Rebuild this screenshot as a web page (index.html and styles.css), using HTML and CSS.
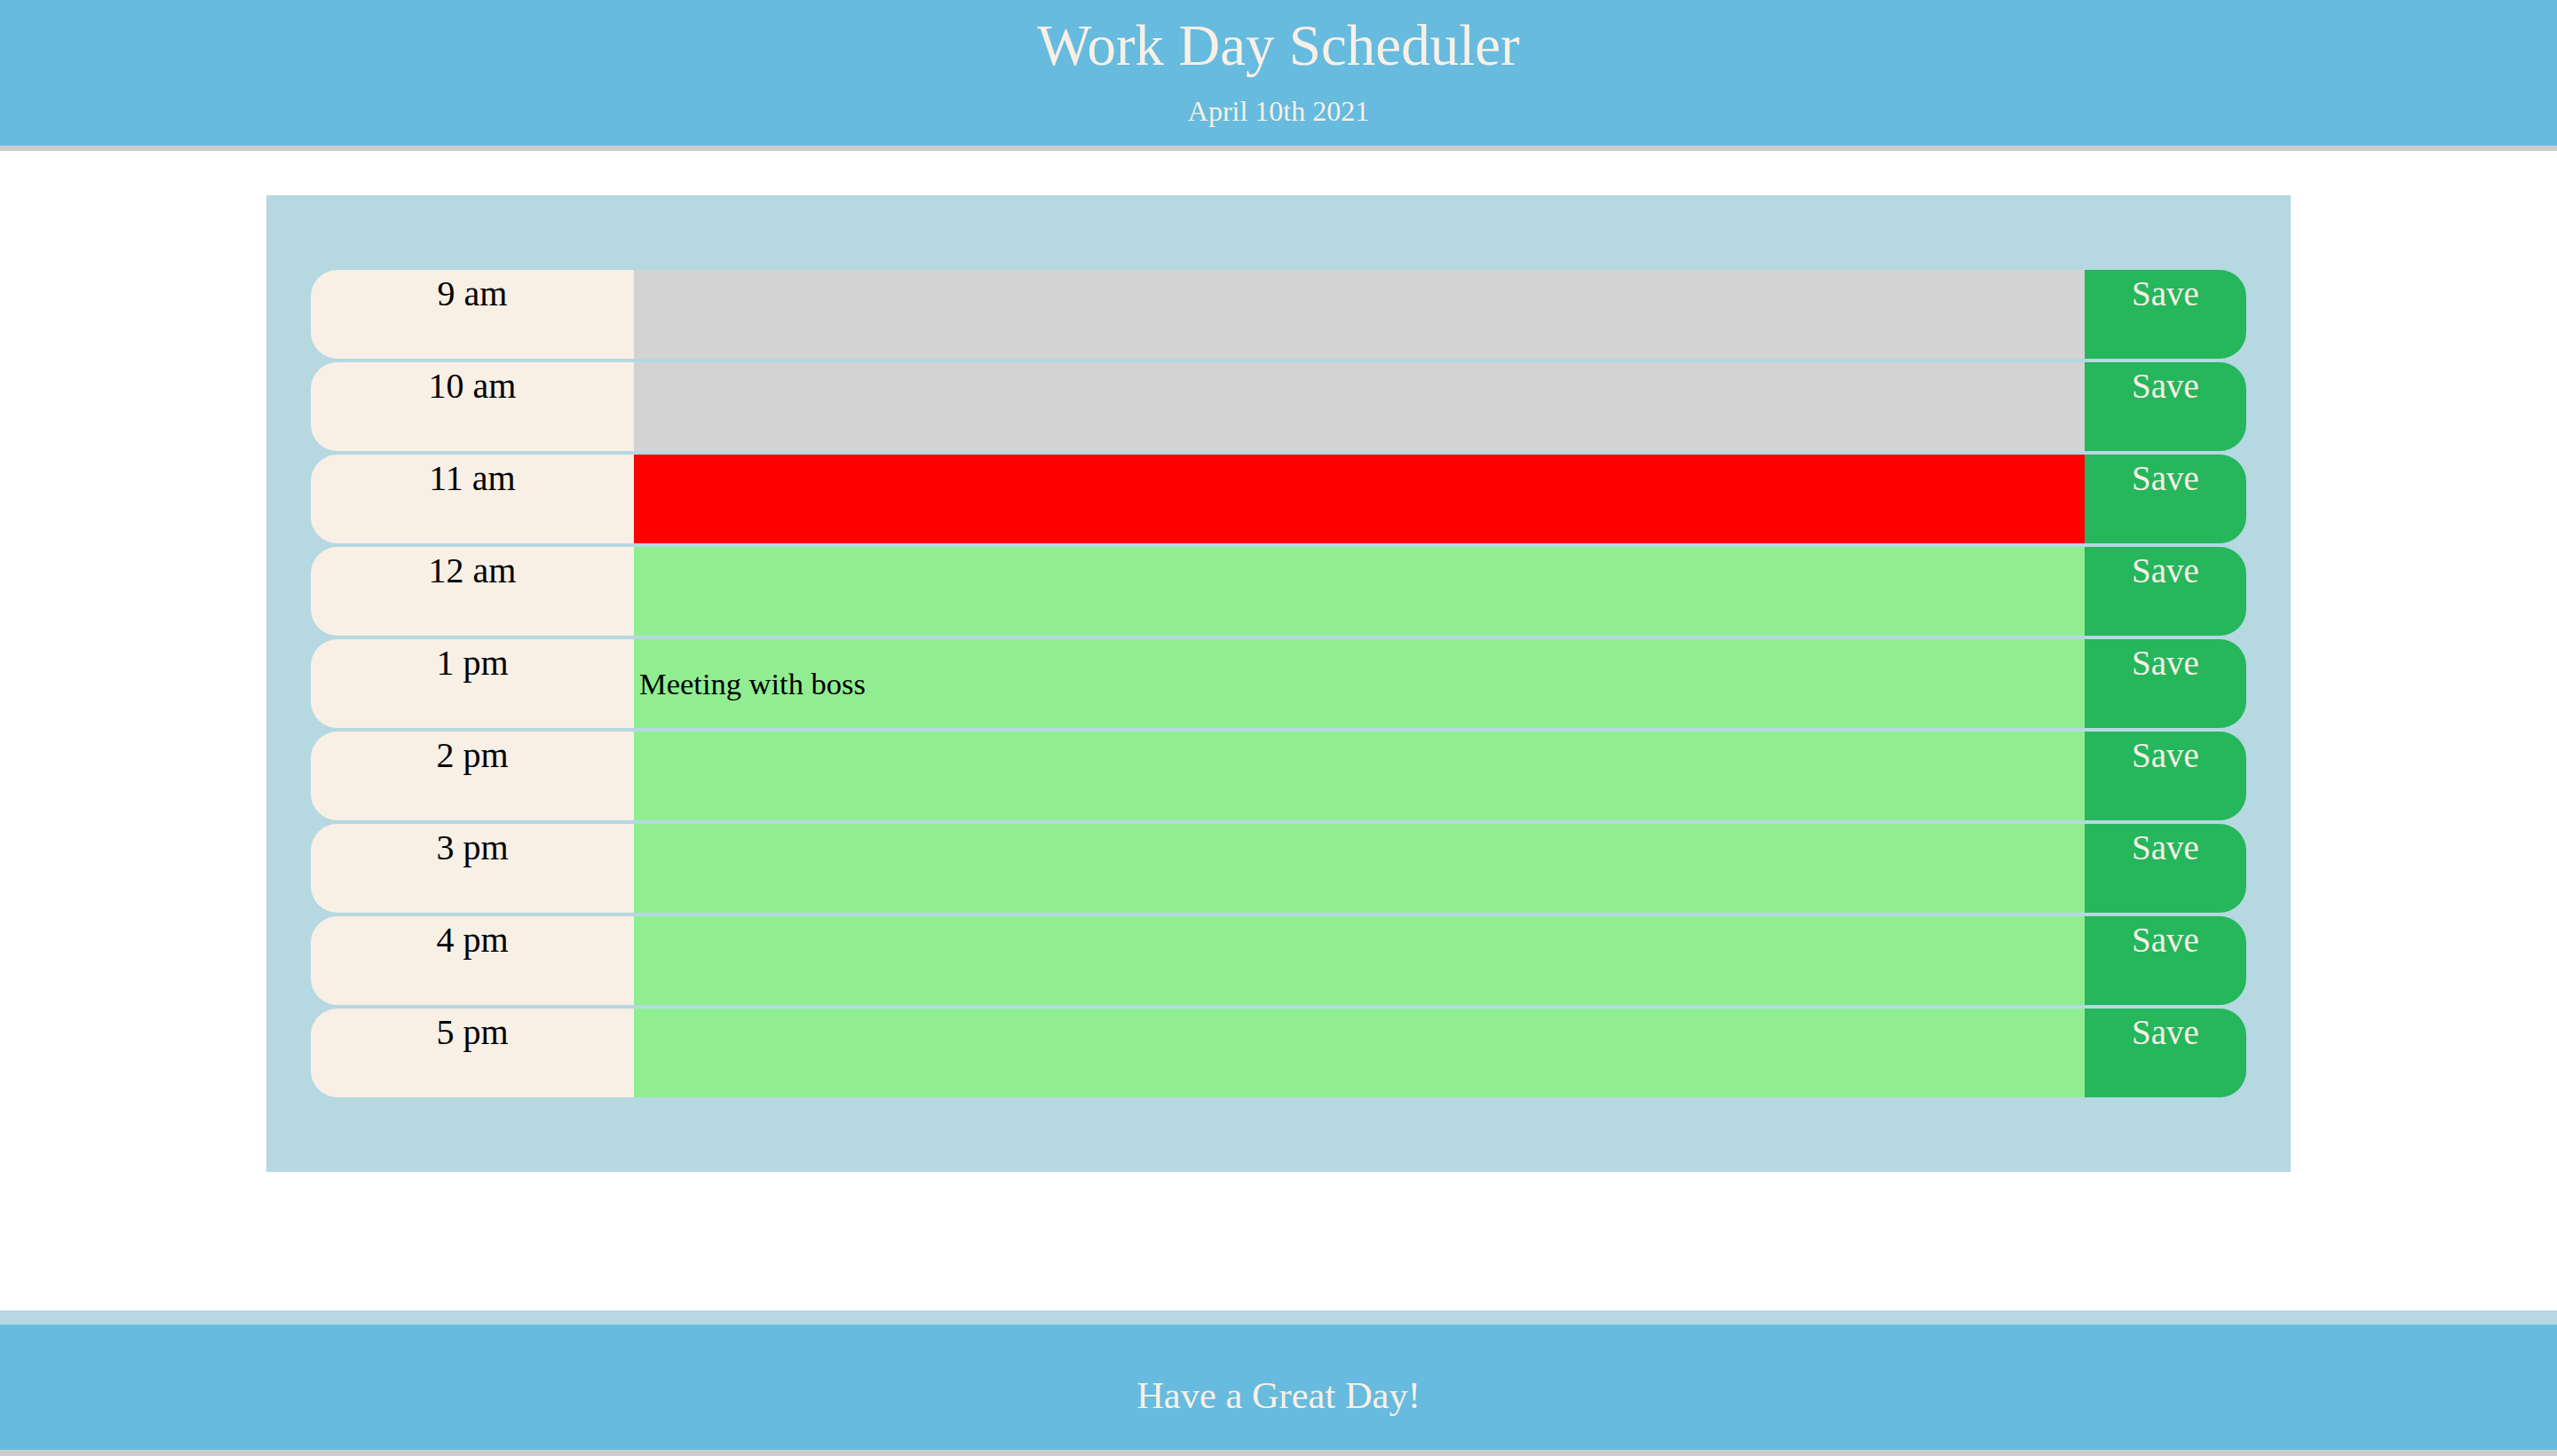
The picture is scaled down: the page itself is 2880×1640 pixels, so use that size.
FILE: index.html
```html
<!DOCTYPE html>
<html lang="en">
<head>
<meta charset="utf-8">
<title>Work Day Scheduler</title>
<link rel="stylesheet" href="styles.css">
</head>
<body>
<header class="site-header">
  <h1 class="site-title">Work Day Scheduler</h1>
  <p class="site-date">April 10th 2021</p>
</header>
<main class="planner">
  <div class="time-block">
    <div class="hour">9 am</div>
    <textarea class="description past"></textarea>
    <button class="save-btn">Save</button>
  </div>
  <div class="time-block">
    <div class="hour">10 am</div>
    <textarea class="description past"></textarea>
    <button class="save-btn">Save</button>
  </div>
  <div class="time-block">
    <div class="hour">11 am</div>
    <textarea class="description present"></textarea>
    <button class="save-btn">Save</button>
  </div>
  <div class="time-block">
    <div class="hour">12 am</div>
    <textarea class="description future"></textarea>
    <button class="save-btn">Save</button>
  </div>
  <div class="time-block">
    <div class="hour">1 pm</div>
    <textarea class="description future">Meeting with boss</textarea>
    <button class="save-btn">Save</button>
  </div>
  <div class="time-block">
    <div class="hour">2 pm</div>
    <textarea class="description future"></textarea>
    <button class="save-btn">Save</button>
  </div>
  <div class="time-block">
    <div class="hour">3 pm</div>
    <textarea class="description future"></textarea>
    <button class="save-btn">Save</button>
  </div>
  <div class="time-block">
    <div class="hour">4 pm</div>
    <textarea class="description future"></textarea>
    <button class="save-btn">Save</button>
  </div>
  <div class="time-block">
    <div class="hour">5 pm</div>
    <textarea class="description future"></textarea>
    <button class="save-btn">Save</button>
  </div>
</main>
<footer class="site-footer">
  <p class="footer-text">Have a Great Day!</p>
</footer>
</body>
</html>
```
FILE: styles.css
```css
* {
  box-sizing: border-box;
}

body {
  margin: 0;
  font-family: "Liberation Serif", "Times New Roman", serif;
  background: #ffffff;
  color: #000000;
}

.site-header {
  height: 170px;
  padding-top: 19px;
  background: #66bbde;
  border-bottom: 6px solid #cccccc;
  text-align: center;
  color: #f8f0e6;
}

.site-title {
  margin: 0;
  font-size: 65px;
  line-height: 64px;
  font-weight: normal;
}

.site-date {
  margin: 26px 0 0;
  font-size: 32px;
  line-height: 32px;
}

.planner {
  width: 2280px;
  margin: 50px auto 0;
  padding: 84px 50px;
  background: #b5d8e1;
  display: flex;
  flex-direction: column;
  gap: 4px;
}

.time-block {
  display: flex;
  height: 100px;
}

.hour {
  flex: 0 0 364px;
  background: #f8efe5;
  border-radius: 30px 0 0 30px;
  text-align: center;
  font-size: 40px;
  line-height: 40px;
  padding-top: 7px;
  color: #000000;
}

.description {
  flex: 1 1 auto;
  border: none;
  resize: none;
  outline: none;
  margin: 0;
  padding: 30px 6px 0;
  font-family: "Liberation Serif", "Times New Roman", serif;
  font-size: 34.5px;
  line-height: 40px;
  color: #000000;
}

.past {
  background: #d3d3d3;
}

.present {
  background: #ff0000;
}

.future {
  background: #90ee90;
}

.save-btn {
  flex: 0 0 182px;
  display: flex;
  justify-content: center;
  align-items: flex-start;
  border: none;
  margin: 0;
  padding: 7px 0 0;
  background: #26b65c;
  border-radius: 0 30px 30px 0;
  font-family: "Liberation Serif", "Times New Roman", serif;
  font-size: 39px;
  line-height: 40px;
  color: #f8f0e6;
  cursor: pointer;
}

.site-footer {
  margin-top: 156px;
  border-top: 16px solid #b5d8e1;
  border-bottom: 8px solid #cccccc;
  background: #66bbde;
  padding-top: 59px;
  height: 165px;
  text-align: center;
}

.footer-text {
  margin: 0;
  font-size: 42.5px;
  line-height: 42px;
  color: #f8f0e6;
}
```
